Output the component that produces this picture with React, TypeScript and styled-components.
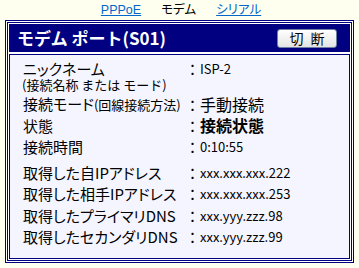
import styled, { createGlobalStyle } from "styled-components";

const GlobalStyle = createGlobalStyle`
  html, body {
    margin: 0;
    padding: 0;
    background: #fffff0;
  }
  body {
    font-family: "Noto Sans CJK JP", sans-serif;
    font-feature-settings: "palt";
  }
`;

type Item = {
  label: string;
  note?: string;
  value: string;
  strong?: boolean;
  latin?: boolean;
  spaced?: boolean;
};

const rows: Item[] = [
  { label: "接続モード", note: "(回線接続方法)", value: "手動接続" },
  { label: "状態", value: "接続状態", strong: true },
  { label: "接続時間", value: "0:10:55", latin: true },
  { label: "取得した自IPアドレス", value: "xxx.xxx.xxx.222", latin: true, spaced: true },
  { label: "取得した相手IPアドレス", value: "xxx.xxx.xxx.253", latin: true },
  { label: "取得したプライマリDNS", value: "xxx.yyy.zzz.98", latin: true },
  { label: "取得したセカンダリDNS", value: "xxx.yyy.zzz.99", latin: true },
];

function App() {
  return (
    <Page>
      <GlobalStyle />
      <Nav>
        <NavLink href="#">PPPoE</NavLink>
        <NavCurrent>モデム</NavCurrent>
        <NavLink href="#">シリアル</NavLink>
      </Nav>
      <Frame>
        <Header>
          <Title>モデム ポート(S01)</Title>
          <CutButton type="button">切&nbsp;断</CutButton>
        </Header>
        <Content>
          <Row $h={33} $top>
            <LabelStack>
              <Label $lh={18}>ニックネーム</Label>
              <Note $block>(接続名称 または モード)</Note>
            </LabelStack>
            <Colon $lh={18}>：</Colon>
            <Value $lh={18} $latin>ISP-2</Value>
          </Row>
          {rows.map((r) => (
            <Row key={r.label} $h={21.5} $mt={r.spaced ? 4 : 0}>
              <Label $lh={21.5}>
                {r.label}
                {r.note && <Note>{r.note}</Note>}
              </Label>
              <Colon $lh={21.5}>：</Colon>
              <Value $lh={21.5} $strong={r.strong} $latin={r.latin}>
                {r.value}
              </Value>
            </Row>
          ))}
        </Content>
      </Frame>
    </Page>
  );
}

const Page = styled.div`
  width: 359px;
  height: 268px;
  background: #fffff0;
  overflow: hidden;
`;

const Nav = styled.nav`
  display: flex;
  justify-content: center;
  gap: 20px;
  height: 20px;
  line-height: 20px;
  font-size: 12.5px;
  padding-left: 3px;
  font-family: "Liberation Sans", "Noto Sans CJK JP", sans-serif;
`;

const NavLink = styled.a`
  color: #0066cc;
  text-decoration: underline;
`;

const NavCurrent = styled.span`
  color: #000;
`;

const Frame = styled.div`
  margin-left: 5px;
  width: 349px;
  box-sizing: border-box;
  border: 3px double #000080;
  background: #fff;
  padding: 1px;
  display: flex;
  flex-direction: column;
  gap: 2px;
`;

const Header = styled.div`
  height: 28px;
  background: #000080;
  display: flex;
  align-items: center;
  justify-content: space-between;
  padding: 0 13px 0 8px;
`;

const Title = styled.div`
  color: #fff;
  font-size: 17px;
  font-weight: bold;
  line-height: 28px;
  font-feature-settings: normal;
`;

const CutButton = styled.button`
  width: 60px;
  height: 19px;
  margin-top: 1px;
  padding: 0;
  border: 1px solid #6f7f9f;
  border-radius: 3px;
  background: linear-gradient(#ffffff, #e4e4e4);
  font-family: "Noto Sans CJK JP", sans-serif;
  font-size: 14px;
  line-height: 17px;
  color: #000;
  word-spacing: 4px;
`;

const Content = styled.div`
  height: 205px;
  box-sizing: border-box;
  border: 1px solid #000080;
  background: #f5f5ff;
  padding: 5px 0 0 13px;
`;

const Row = styled.div<{ $h: number; $mt?: number; $top?: boolean }>`
  display: grid;
  grid-template-columns: 162px 15px 1fr;
  align-items: ${(p) => (p.$top ? "start" : "center")};
  height: ${(p) => p.$h}px;
  margin-top: ${(p) => p.$mt || 0}px;
  white-space: nowrap;
`;

const LabelStack = styled.div`
  display: flex;
  flex-direction: column;
`;

const Label = styled.div<{ $lh: number }>`
  font-size: 15px;
  line-height: ${(p) => p.$lh}px;
  color: #000;
`;

const Note = styled.span<{ $block?: boolean }>`
  display: ${(p) => (p.$block ? "block" : "inline")};
  font-size: 13px;
  font-feature-settings: normal;
  line-height: ${(p) => (p.$block ? "14px" : "inherit")};
  margin-left: ${(p) => (p.$block ? "-1px" : "0")};
`;

const Colon = styled.div<{ $lh: number }>`
  font-size: 15px;
  line-height: ${(p) => p.$lh}px;
  text-align: center;
  font-feature-settings: normal;
`;

const Value = styled.div<{ $lh: number; $strong?: boolean; $latin?: boolean }>`
  font-size: ${(p) => (p.$latin ? "13px" : "16px")};
  font-weight: ${(p) => (p.$strong ? "bold" : "normal")};
  line-height: ${(p) => p.$lh}px;
  color: #000;
`;

export default App;
